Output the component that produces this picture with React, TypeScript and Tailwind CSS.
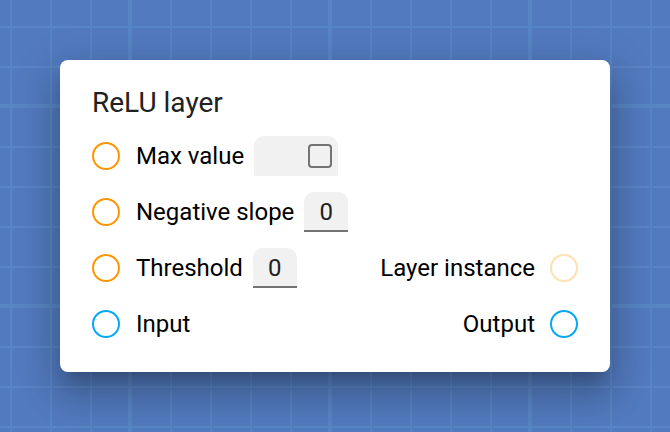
import type { CSSProperties, ReactNode } from "react";

type Tone = "orange" | "faded" | "blue";

const tones: Record<Tone, string> = {
  orange: "border-[#ff9800]",
  faded: "border-[#ffe0b2]",
  blue: "border-[#03a9f4]",
};

// Graph paper: 40px cells, with a heavier line at every fifth one.
const grid: CSSProperties = {
  backgroundImage: [
    "linear-gradient(to right, #5885c4 4px, transparent 4px)",
    "linear-gradient(to bottom, #5885c4 4px, transparent 4px)",
    "linear-gradient(to right, #5885c4 2px, transparent 2px)",
    "linear-gradient(to bottom, #5885c4 2px, transparent 2px)",
  ].join(","),
  backgroundSize: "200px 200px, 200px 200px, 40px 40px, 40px 40px",
  backgroundPosition: "128px 0, 0 104px, 10px 0, 0 26px",
};

function Socket({ tone, name }: { tone: Tone; name: string }) {
  return (
    <button
      type="button"
      aria-label={`Connect ${name}`}
      className={`size-7 shrink-0 rounded-full border-2 bg-white ${tones[tone]}`}
    />
  );
}

function Row({ children }: { children: ReactNode }) {
  return <div className="flex h-14 items-center justify-between">{children}</div>;
}

function InputPort({
  tone,
  name,
  id,
  children,
}: {
  tone: Tone;
  name: string;
  id?: string;
  children?: ReactNode;
}) {
  return (
    <div className="flex items-center">
      <Socket tone={tone} name={name} />
      {id ? (
        <label htmlFor={id} className="mr-2.5 ml-4">
          {name}
        </label>
      ) : (
        <span className="ml-4">{name}</span>
      )}
      {children}
    </div>
  );
}

function OutputPort({ tone, name }: { tone: Tone; name: string }) {
  return (
    <div className="flex items-center gap-[15px]">
      <span>{name}</span>
      <Socket tone={tone} name={name} />
    </div>
  );
}

function NumberField({ id }: { id: string }) {
  return (
    <input
      id={id}
      type="text"
      inputMode="decimal"
      defaultValue="0"
      className="h-10 w-11 rounded-t-[10px] border-b-2 border-[#737373] bg-[#f1f1f1] pt-0.5 text-center text-[#212121] outline-none"
    />
  );
}

export default function App() {
  return (
    <main
      className="min-h-screen bg-[#527abe] p-[60px] font-['Roboto',sans-serif] text-2xl text-black"
      style={grid}
    >
      <section className="rounded-lg bg-white px-8 pt-6 pb-5 shadow-[0_14px_16px_-8px_rgba(0,0,0,0.2),0_24px_34px_4px_rgba(0,0,0,0.14),0_10px_44px_8px_rgba(0,0,0,0.12)]">
        <h1 className="mb-1.5 text-[28px] leading-[38px] text-[#212121]">ReLU layer</h1>
        <Row>
          <InputPort tone="orange" name="Max value" id="max-value">
            <div className="flex h-10 w-[84px] items-center justify-end rounded-t-[10px] bg-[#f1f1f1] pr-1.5">
              <input
                id="max-value"
                type="checkbox"
                className="size-6 appearance-none rounded border-2 border-[#737373]"
              />
            </div>
          </InputPort>
        </Row>
        <Row>
          <InputPort tone="orange" name="Negative slope" id="negative-slope">
            <NumberField id="negative-slope" />
          </InputPort>
        </Row>
        <Row>
          <InputPort tone="orange" name="Threshold" id="threshold">
            <NumberField id="threshold" />
          </InputPort>
          <OutputPort tone="faded" name="Layer instance" />
        </Row>
        <Row>
          <InputPort tone="blue" name="Input" />
          <OutputPort tone="blue" name="Output" />
        </Row>
      </section>
    </main>
  );
}
